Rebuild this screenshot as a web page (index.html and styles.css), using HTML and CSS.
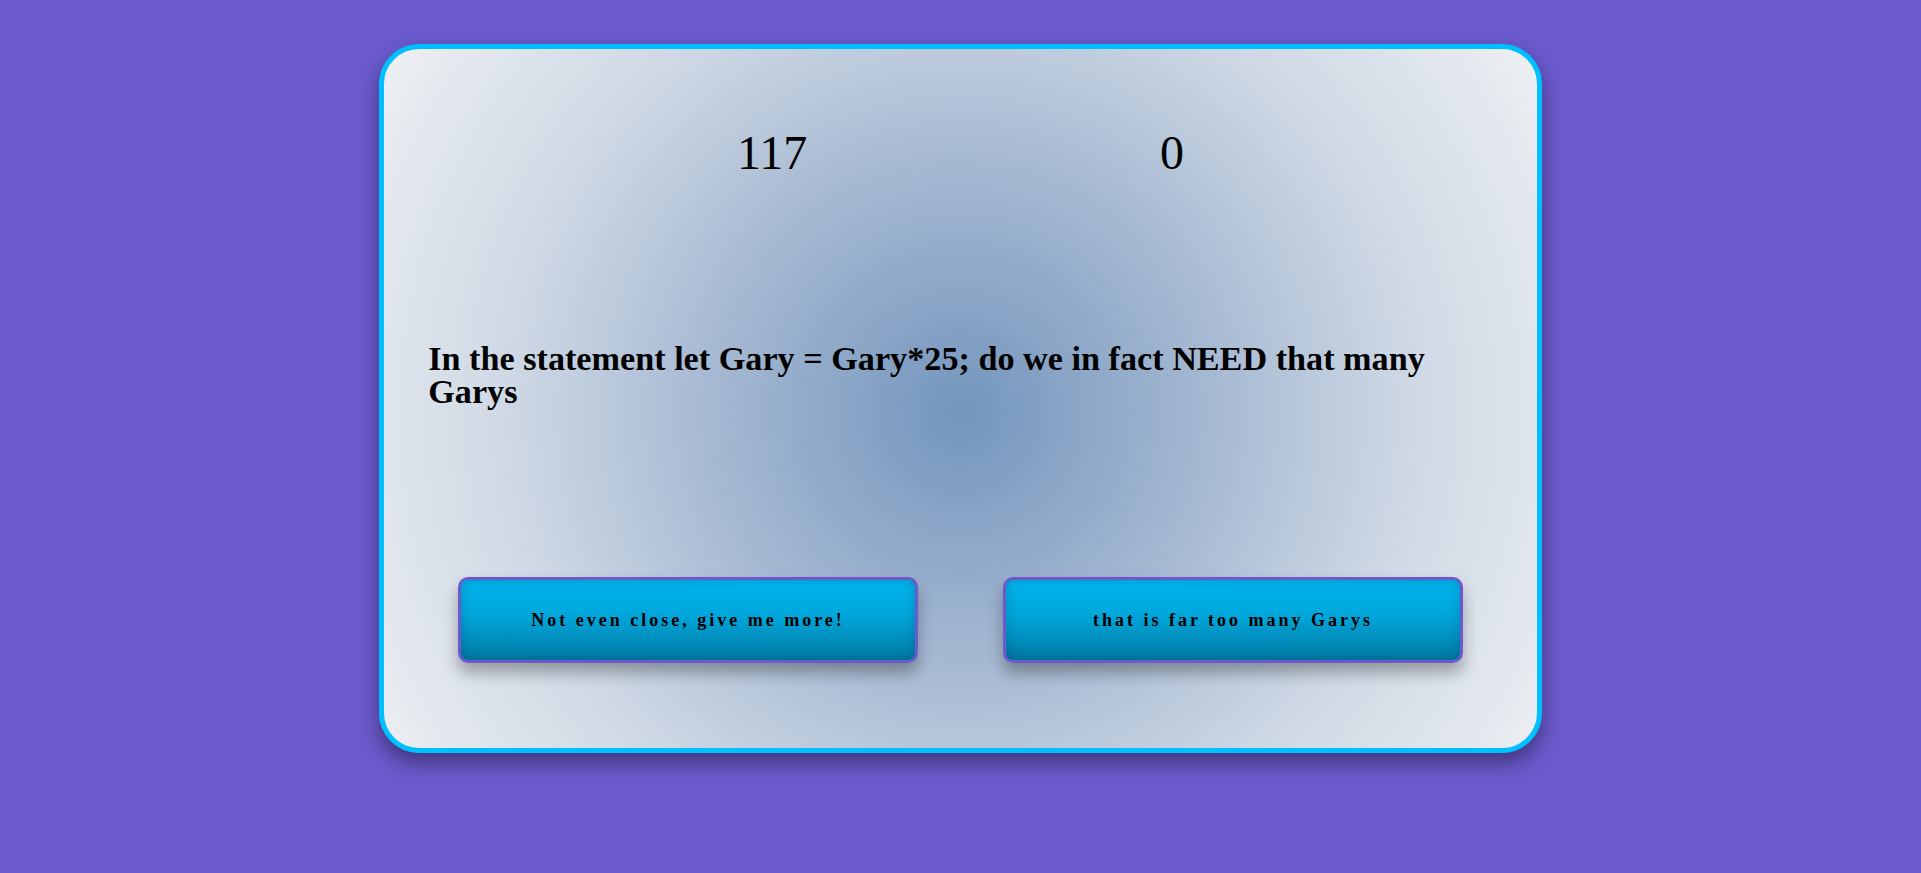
FILE: index.html
```html
<!DOCTYPE html>
<html>
<head>
<meta charset="utf-8">
<link rel="stylesheet" href="styles.css">
</head>
<body>
<div class="card">
  <div class="scores">
    <span class="score">117</span>
    <span class="score">0</span>
  </div>
  <h1 class="question">In the statement let Gary = Gary*25; do we in fact NEED that many Garys</h1>
  <div class="answers">
    <button class="answer">Not even close, give me more!</button>
    <button class="answer">that is far too many Garys</button>
  </div>
</div>
</body>
</html>
```
FILE: styles.css
```css
html, body {
  margin: 0;
  padding: 0;
}
body {
  background: #6a5acd;
  font-family: "Liberation Serif", "Times New Roman", serif;
  height: 873px;
  overflow: hidden;
}
.card {
  width: 60%;
  height: 699px;
  margin: 44px auto 0;
  border: 5px solid #00bfff;
  border-radius: 40px;
  background: radial-gradient(circle at 50% 52%, #7395bd 0%, #a3b7d1 35%, #cdd7e4 65%, #eef0f3 100%);
  box-shadow: 0 10px 20px rgba(0, 0, 0, 0.4);
  display: flex;
  flex-direction: column;
}
.scores {
  display: flex;
  justify-content: space-evenly;
  margin-top: 76px;
}
.score {
  font-size: 48px;
  color: #000;
}
.question {
  margin: 162px 0 0;
  padding: 0 44px;
  font-size: 34.2px;
  line-height: 33px;
  font-weight: bold;
  color: #000;
}
.answers {
  display: flex;
  justify-content: center;
  gap: 85px;
  margin-top: 169px;
}
.answer {
  width: 460px;
  height: 86px;
  border: 3px solid #6a5acd;
  border-radius: 10px;
  background: linear-gradient(to bottom, #00b6ee 0%, #00a6da 45%, #0079a3 100%);
  box-shadow: 0 10px 15px rgba(0, 0, 0, 0.3), inset 0 0 12px rgba(0, 40, 80, 0.25);
  font-family: "Liberation Serif", "Times New Roman", serif;
  font-weight: bold;
  font-size: 18px;
  letter-spacing: 3px;
  color: #000;
  cursor: pointer;
}
```
